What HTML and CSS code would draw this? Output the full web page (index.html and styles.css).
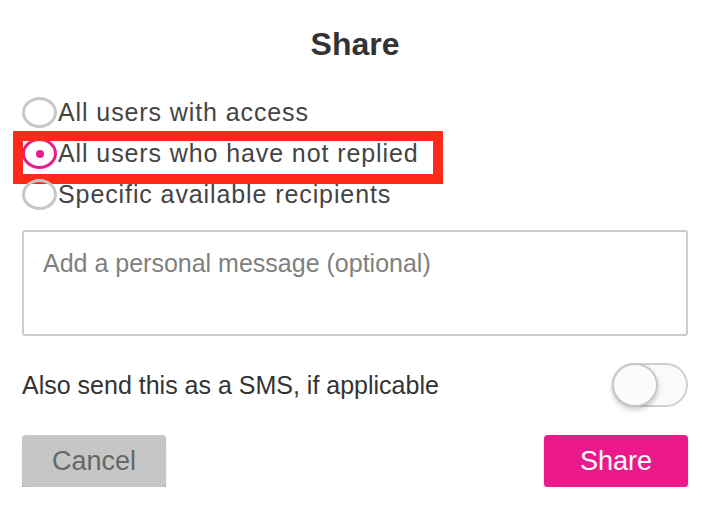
FILE: index.html
```html
<!DOCTYPE html>
<html lang="en">
<head>
    <meta charset="UTF-8">
    <meta name="viewport" content="width=device-width, initial-scale=1.0">
    <title>Share</title>
    <link rel="stylesheet" href="styles.css">
</head>
<body>
    <div class="dialog">
        <h1>Share</h1>
        <div class="options">
            <label class="option">
                <span class="radio"></span>
                <span>All users with access</span>
            </label>
            <label class="option selected">
                <span class="radio"></span>
                <span>All users who have not replied</span>
                <span class="highlight"></span>
            </label>
            <label class="option">
                <span class="radio"></span>
                <span>Specific available recipients</span>
            </label>
        </div>
        <textarea class="message" placeholder="Add a personal message (optional)"></textarea>
        <div class="sms-row">
            <span>Also send this as a SMS, if applicable</span>
            <span class="toggle"><span class="knob"></span></span>
        </div>
        <div class="actions">
            <button class="btn cancel">Cancel</button>
            <button class="btn share">Share</button>
        </div>
    </div>
</body>
</html>
```

FILE: styles.css
```css
body {
    margin: 0;
    font-family: 'Liberation Sans', Arial, sans-serif;
    background-color: #ffffff;
    color: #444;
}

.dialog {
    padding: 0 18px 0 22px;
}

h1 {
    margin: 0;
    padding-top: 26px;
    height: 42px;
    text-align: center;
    font-size: 32px;
    font-weight: bold;
    color: #333;
}

.options {
    margin-top: 24px;
}

.option {
    position: relative;
    display: flex;
    align-items: center;
    height: 41px;
    font-size: 25px;
    letter-spacing: 0.9px;
    color: #444;
}

.radio {
    box-sizing: border-box;
    width: 35px;
    height: 31px;
    border: 3px solid #c8c8c8;
    border-radius: 50%;
    margin-right: 1px;
    flex-shrink: 0;
    position: relative;
}

.selected .radio {
    border-color: #e91e8c;
}

.selected .radio::after {
    content: "";
    position: absolute;
    left: 11px;
    top: 9px;
    width: 8px;
    height: 8px;
    border-radius: 50%;
    background: #e91e8c;
}

.highlight {
    position: absolute;
    left: -9px;
    top: -2px;
    width: 410px;
    height: 33px;
    border: 10px solid #ff2a1a;
}

.message {
    display: block;
    box-sizing: border-box;
    width: 666px;
    height: 106px;
    margin-top: 15px;
    padding: 17px 19px;
    border: 2px solid #ccc;
    border-radius: 3px;
    font-family: inherit;
    font-size: 25px;
    resize: none;
}

.message::placeholder {
    color: #808080;
}

.sms-row {
    display: flex;
    align-items: center;
    justify-content: space-between;
    margin-top: 27px;
    font-size: 25px;
    color: #333;
}

.toggle {
    position: relative;
    box-sizing: border-box;
    width: 76px;
    height: 44px;
    border: 2px solid #cfcfcf;
    border-radius: 22px;
    background: #fafafa;
}

.knob {
    position: absolute;
    left: -2px;
    top: -2px;
    box-sizing: border-box;
    width: 46px;
    height: 44px;
    border: 2px solid #c8c8c8;
    border-radius: 50%;
    background: #fbfbfb;
    box-shadow: 0 3px 5px rgba(0, 0, 0, 0.2);
}

.actions {
    display: flex;
    justify-content: space-between;
    margin-top: 28px;
}

.btn {
    width: 144px;
    height: 52px;
    border: none;
    border-radius: 4px;
    font-family: inherit;
    font-size: 27px;
    cursor: pointer;
}

.cancel {
    background-color: #c6c6c6;
    color: #666;
    box-shadow: 0 3px 1px #a6a6a6;
}

.share {
    background-color: #ec198c;
    color: #fff;
    box-shadow: 0 2px 2px rgba(0, 0, 0, 0.3);
}
```
